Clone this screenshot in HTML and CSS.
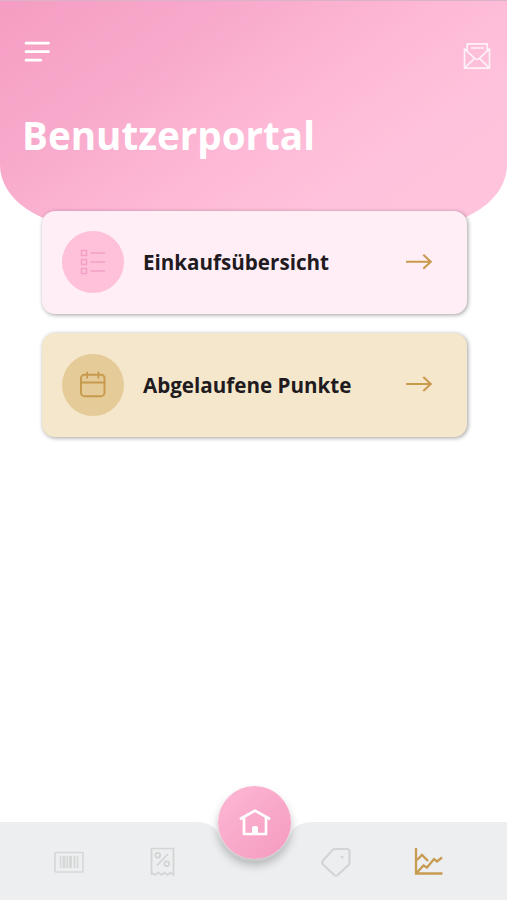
FILE: index.html
```html
<!DOCTYPE html>
<html lang="de">
<head>
<meta charset="utf-8">
<title>Benutzerportal</title>
<link rel="stylesheet" href="styles.css">
</head>
<body>
<div class="app">
  <header class="header">
    <div class="toolbar">
      <svg class="menu" width="28" height="24" viewBox="0 0 28 24" fill="none" stroke="#fff" stroke-width="2.8" stroke-linecap="round"><path d="M4 3.200H26.500M4 11.700H26.500M4 20.200H18.8"/></svg>
      <svg class="mail" width="28" height="28" viewBox="0 0 28 28" fill="none" stroke="#fff" stroke-width="1.7" stroke-linejoin="round" opacity=".8"><path d="M4.2 8.5V1.8H24.2V8.5M1.5 6.8V26.2H26.5V6.8L16 16.6Q14 18.2 12 16.6ZM1.5 26.2L11.5 16.4M26.5 26.2L16.5 16.4M8 6H21"/></svg>
    </div>
    <h1 class="title">Benutzerportal</h1>
  </header>
  <main class="cards">
    <a class="card card-pink">
      <span class="badge"><svg width="28" height="28" viewBox="0 0 28 28" fill="none" stroke="#f2a0c4" stroke-width="1.5"><path d="M2.5 2.500H7.5V7.5H2.5ZM2.5 11.500H7.5V16.5H2.5ZM2.5 20.500H7.5V25.5H2.5ZM11.500 5H26M11.500 14H26M11.500 23H26"/></svg></span>
      <span class="label">Einkaufsübersicht</span>
      <svg class="arrow" width="28" height="18" viewBox="0 0 28 18" fill="none" stroke="#c79a4c" stroke-width="2"><path d="M1 8.700H26M18.3 1.700L25.8 8.700L18.3 15.700"/></svg>
    </a>
    <a class="card card-gold">
      <span class="badge"><svg width="28" height="28" viewBox="0 0 28 28" fill="none" stroke="#c79a4c" stroke-width="1.9" stroke-linecap="round"><rect x="2" y="3.700" width="23.500" height="21.5" rx="3.5"/><path d="M2 11.5H25.500M8.2 1.500V6.700M19.400 1.500V6.700"/></svg></span>
      <span class="label">Abgelaufene Punkte</span>
      <svg class="arrow" width="28" height="18" viewBox="0 0 28 18" fill="none" stroke="#c79a4c" stroke-width="2"><path d="M1 9H26M18.3 2L25.8 9L18.3 16"/></svg>
    </a>
  </main>
  <nav class="nav">
    <svg class="nav-bg" width="507" height="78" viewBox="0 0 507 78"><path d="M0 0H196Q211 0 217 9C225 29 237 39 254.500 39S284 29 292 9Q298 0 313 0H507V78H0Z" fill="#eceeef"/></svg>
    <a class="tab"><svg width="30" height="30" viewBox="0 0 30 30" fill="none" stroke="#d6d8d8"><rect x="1" y="5.500" width="28" height="19.500" rx="1" stroke-width="1.7"/><path d="M6.500 9V21M23.500 9V21" stroke-width="1.5"/><path d="M10 9V21M16.500 9V21" stroke-width="3"/><path d="M13.300 9V21M20.500 9V21" stroke-width="1.8"/></svg></a>
    <a class="tab"><svg width="30" height="30" viewBox="0 0 30 30" fill="none" stroke="#d3d5d5" stroke-width="1.700"><path d="M3.500 28V1.500H25.500V28L22.500 25.500L19.500 28L16.500 25.500L13.500 28L10.500 25.500L7 28L3.500 25.500M9 18.300L20 7"/><circle cx="9.800" cy="8.300" r="2.400"/><circle cx="18.800" cy="16.800" r="2.400"/></svg></a>
    <a class="home"><svg width="32" height="30" viewBox="0 0 32 30" fill="none" stroke="#fff" stroke-width="2.700" stroke-linecap="round" stroke-linejoin="round"><path d="M2 10.500L16 2.600L30 10.500M5 10V26H27V10"/><path d="M13 26V20Q13 18 15 18H17Q19 18 19 20V26Z" fill="#fff" stroke="none"/></svg></a>
    <a class="tab tab-tag"><svg width="30" height="30" viewBox="0 0 30 30" fill="none" stroke="#d3d5d5" stroke-width="2.200" stroke-linejoin="round"><path d="M14 2H26Q28.500 2 28.500 4.500V15.500Q28.500 17 27.300 18.200L17 27.800Q15 29.300 13 27.800L2 17.500Q.5 15.500 2 13.500L11 3.500Q12.300 2 14 2Z"/><path d="M20.500 11L21.700 9" stroke-width="3"/></svg></a>
    <a class="tab"><svg width="30" height="30" viewBox="0 0 30 30" fill="none" stroke="#c79c52" stroke-width="2.300"><path d="M2 1V26.500H28.500M3 13L8 8L14 14M3 25.500L9.500 18.500L13 20.500L20 12L23 14.500L28 10.500"/></svg></a>
  </nav>
</div>
</body>
</html>
```
FILE: styles.css
```css
* { box-sizing: border-box; }
body { margin: 0; background: #fff; font-family: "Open Sans", "Noto Sans", sans-serif; }
.app { width: 507px; height: 900px; display: flex; flex-direction: column; overflow: hidden; }
.header {
  height: 227px;
  padding: 40px 16px 0 22px;
  border-top: 1px solid #dbb2cb;
  border-radius: 0 0 90px 90px / 0 0 62px 62px;
  background: linear-gradient(145deg, #f59dc2 0%, #f8a9cb 28%, #fdb8d5 52%, #ffc2dc 75%, #ffc4dd 100%);
}
.toolbar { display: flex; justify-content: space-between; height: 31px; }
.menu { margin-top: -1px; }
.mail { margin-top: 1px; }
.title { margin: 36px 0 0; color: #fff; font-size: 38.6px; line-height: 54px; font-weight: 700; white-space: nowrap; }
.cards { margin: -16px 40px 0 42px; display: flex; flex-direction: column; gap: 19px; }
.card {
  height: 103px;
  display: flex;
  align-items: center;
  padding: 0 34px 0 20px;
  border-radius: 13px;
  box-shadow: 1px 1px 4px rgba(0, 0, 0, .38);
}
.card-pink { background: #ffeef6; }
.card-gold { height: 104px; background: #f5e7cb; }
.badge { width: 62px; height: 62px; margin-top: -1px; border-radius: 50%; display: flex; align-items: center; justify-content: center; }
.card-pink .badge { background: #ffc0da; }
.card-gold .badge { background: #e5cb98; }
.label { margin: -2px 0 0 19px; color: #211a1e; font-size: 20.6px; line-height: 28px; font-weight: 700; white-space: nowrap; }
.card-gold .label { margin-top: -1px; }
.arrow { margin-left: auto; margin-top: -2px; }
.nav {
  position: relative;
  margin-top: auto;
  height: 78px;
  padding: 0 27px 0 22px;
  display: grid;
  grid-template-columns: 93px 95px 89px 75px 106px;
  align-items: center;
  justify-items: center;
}
.nav-bg { position: absolute; left: 0; top: 0; }
.tab { position: relative; height: 30px; margin-top: 2px; }
.tab-tag { margin-right: 2px; }
.tab:last-child { margin-left: 4px; }
.home {
  position: relative;
  width: 73px;
  height: 73px;
  margin-top: -77px;
  border-radius: 50%;
  display: flex;
  align-items: center;
  justify-content: center;
  background: linear-gradient(315deg, #f59ac0, #fdb8d5);
  box-shadow: 0 6px 10px rgba(0, 0, 0, .25);
}
```
